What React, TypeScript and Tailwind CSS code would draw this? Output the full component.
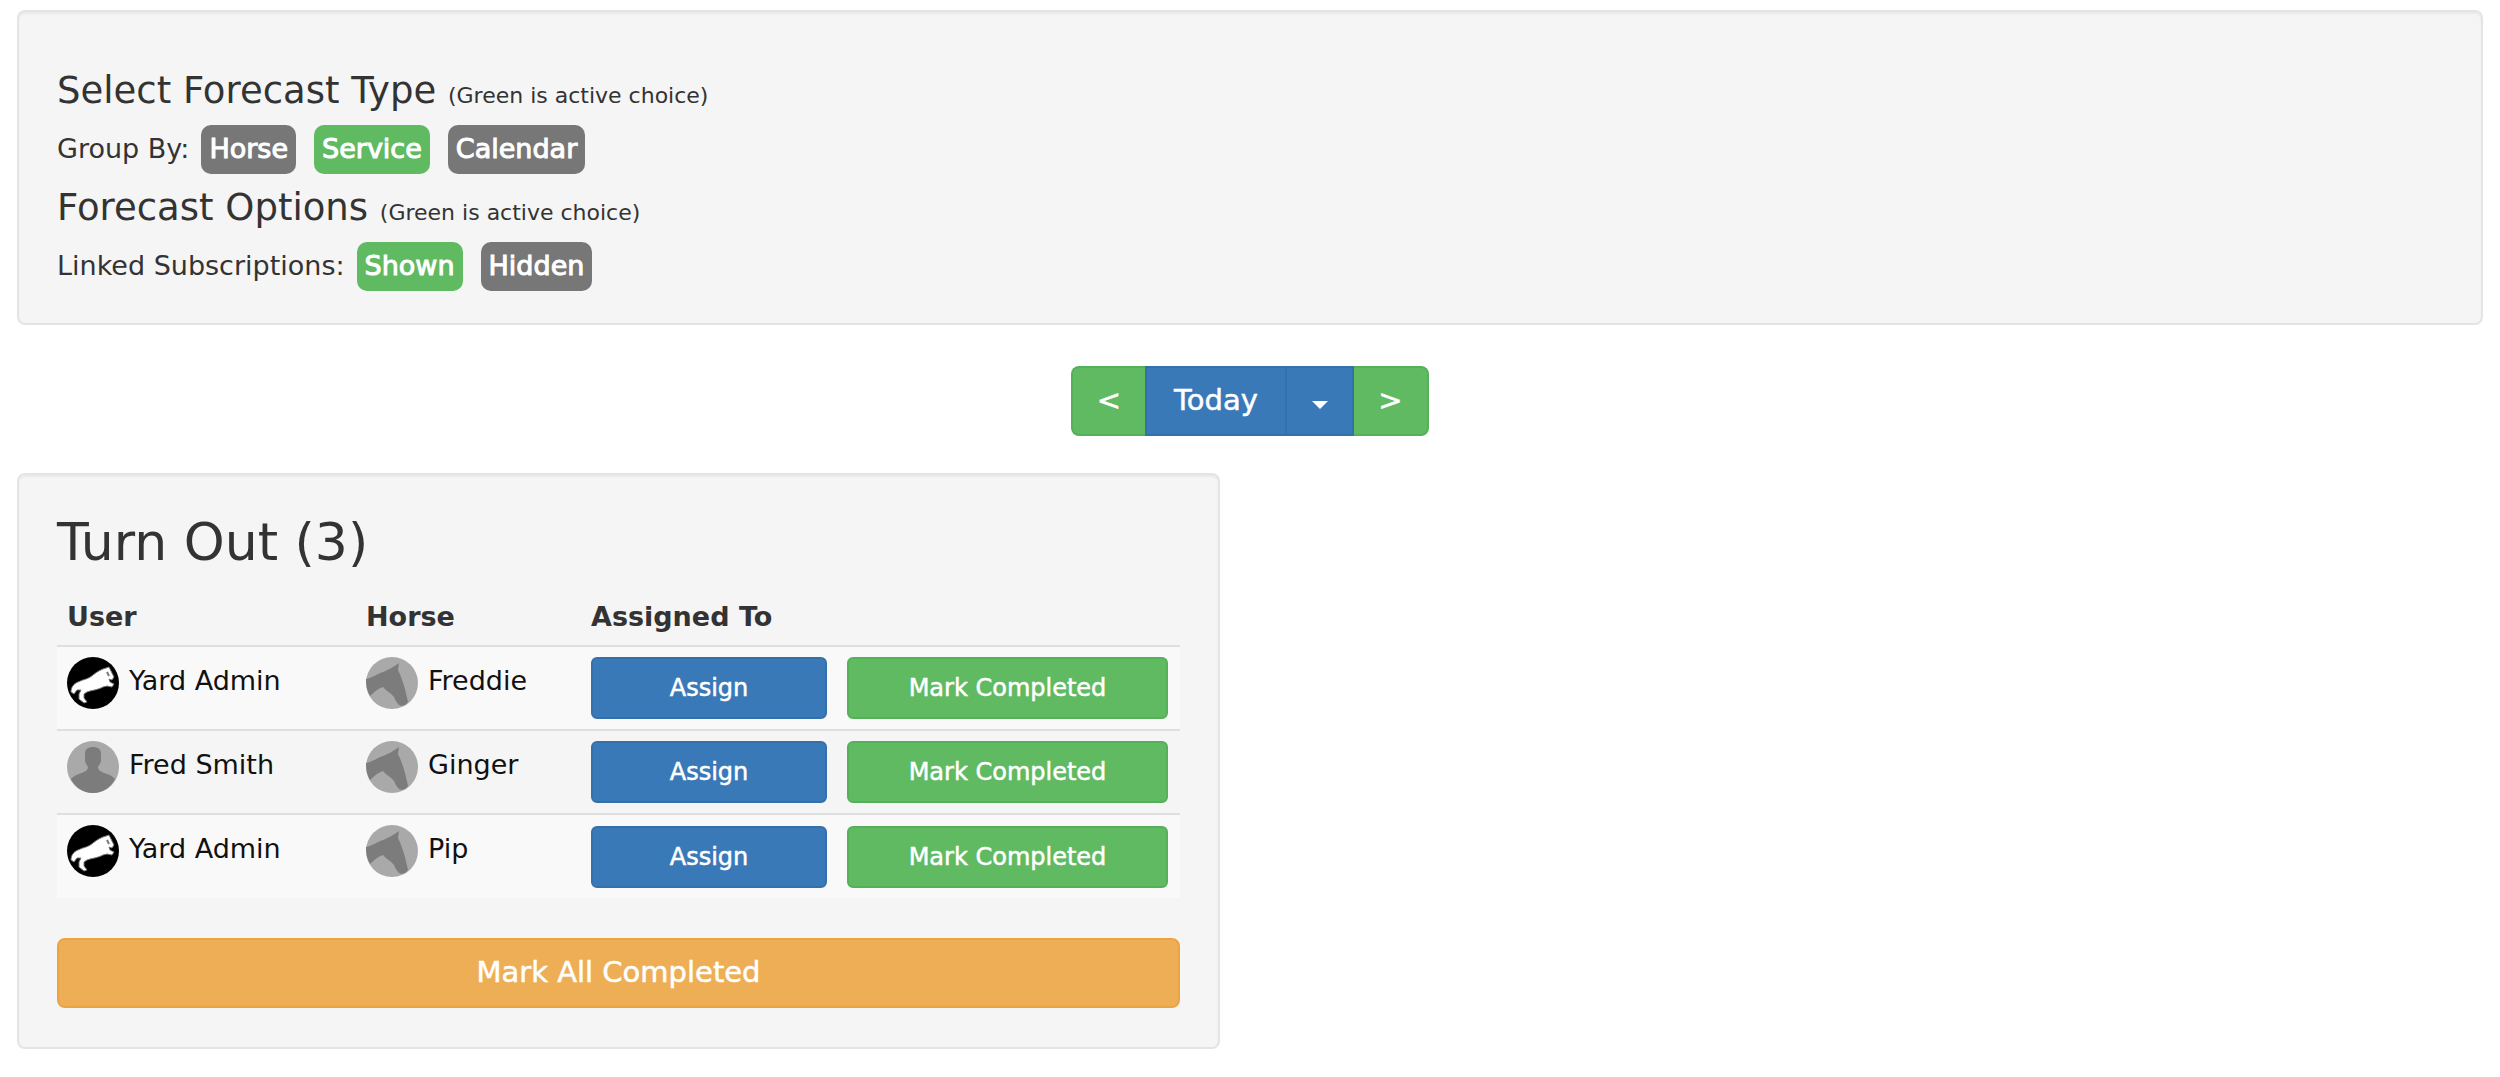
import React from 'react';

type Tone = 'green' | 'gray';

interface TagProps {
  label: string;
  active?: boolean;
}

interface Subscription {
  user: string;
  avatar: 'yard' | 'person';
  horse: string;
}

const subscriptions: Subscription[] = [
  { user: 'Yard Admin', avatar: 'yard', horse: 'Freddie' },
  { user: 'Fred Smith', avatar: 'person', horse: 'Ginger' },
  { user: 'Yard Admin', avatar: 'yard', horse: 'Pip' },
];

const tagTones: Record<Tone, string> = {
  green: 'bg-[#5fba62]',
  gray: 'bg-[#777777]',
};

const panel =
  'rounded-lg border-2 border-[#e4e4e4] bg-[#f5f5f5] px-[38px] shadow-[inset_0_2px_2px_rgba(0,0,0,0.05)]';

const buttonText = 'text-white [-webkit-text-stroke:0.5px_white]';
const blueButton = `border-2 border-[#3470aa] bg-[#3a79b7] ${buttonText}`;
const greenButton = `border-2 border-[#54b158] bg-[#5fba62] ${buttonText}`;

const Tag: React.FC<TagProps> = ({ label, active }) => (
  <a
    href="#"
    className={`flex h-[49px] items-center rounded-[10px] px-2 text-[27px] text-white [-webkit-text-stroke:1px_white] ${
      active ? tagTones.green : tagTones.gray
    }`}
  >
    {label}
  </a>
);

const OptionHeading: React.FC<{ title: string }> = ({ title }) => (
  <h4 className="flex h-[67px] items-center text-[37px]">
    <span>
      {title} <small className="text-[22px]">(Green is active choice)</small>
    </span>
  </h4>
);

const YardLogo: React.FC = () => (
  <svg viewBox="0 0 52 52" className="size-[52px] shrink-0" aria-hidden="true">
    <circle cx="26" cy="26" r="26" fill="#000" />
    <path
      d="M4 35C4 31 6 27 11 25C17 22 22 22 26 18C31 14 35 12 39 11L42 10L44 14L47 20L45 23L42 22L43 25L47 27L45 30L40 29L36 30C31 33 25 33 20 35L17 37L17 41L20 45L17 46L12 42L12 37L14 33L10 33L7 37Z"
      fill="#ffffff"
      stroke="#777"
      strokeWidth="1"
      strokeLinejoin="round"
    />
    <path d="M40 15L42 19" stroke="#777" strokeWidth="2" />
  </svg>
);

const PersonIcon: React.FC = () => (
  <svg viewBox="0 0 52 52" className="size-[52px] shrink-0" aria-hidden="true">
    <circle cx="26" cy="26" r="26" fill="#a9a9a9" />
    <path
      d="M18 13C18 8 21 6 26 6S34 8 34 13V19C34 22 32 24 31 26C31 30 35 31 40 33C44 34 46 36 48 38C44 46 36 52 26 52S8 46 4 38C6 36 8 34 12 33C17 31 21 30 21 26C20 24 18 22 18 19Z"
      fill="#7c7c7c"
    />
  </svg>
);

const HorseIcon: React.FC = () => (
  <svg viewBox="0 0 52 52" className="size-[52px] shrink-0" aria-hidden="true">
    <circle cx="26" cy="26" r="26" fill="#a9a9a9" />
    <path
      d="M0 22C6 21 11 17 17 15C22 13 26 11 33 6L32 13C35 19 37 25 39 32L42 45C40 48 36 50 33 48C30 45 29 42 28 40C25 36 20 34 17 30C13 31 9 34 4 39C1 34 0 28 0 22Z"
      fill="#7c7c7c"
    />
  </svg>
);

const App: React.FC = () => {
  return (
    <main className="px-[17px] pt-[10px] pb-[30px] text-[27px] text-[#333333] font-['DejaVu_Sans',Verdana,sans-serif]">
      {/* Forecast filters */}
      <section className={`${panel} pt-[45px] pb-[32px]`}>
        <OptionHeading title="Select Forecast Type" />
        <div className="flex h-[50px] items-center">
          <span className="mr-3">Group By:</span>
          <div className="flex gap-[18px]">
            <Tag label="Horse" />
            <Tag label="Service" active />
            <Tag label="Calendar" />
          </div>
        </div>
        <OptionHeading title="Forecast Options" />
        <div className="flex h-[50px] items-center">
          <span className="mr-3">Linked Subscriptions:</span>
          <div className="flex gap-[18px]">
            <Tag label="Shown" active />
            <Tag label="Hidden" />
          </div>
        </div>
      </section>

      {/* Day picker */}
      <div className="mt-[41px] flex h-[70px] justify-center text-[29px]">
        <button className={`${greenButton} w-[74px] rounded-l-lg border-r-0`}>&lt;</button>
        <button className={`${blueButton} w-[140px] border-r-0`}>Today</button>
        <button aria-label="Choose day" className={`${blueButton} flex w-[69px] items-center justify-center`}>
          <svg viewBox="0 0 16 8" className="mt-2 h-2 w-4" aria-hidden="true">
            <path d="M0 0h16L8 8z" fill="currentColor" />
          </svg>
        </button>
        <button className={`${greenButton} w-[75px] rounded-r-lg border-l-0`}>&gt;</button>
      </div>

      {/* Service group */}
      <section className={`${panel} mt-[37px] w-[calc(50%-30px)] pt-[35px] pb-[39px]`}>
        <h3 className="text-[52px] leading-[64px]">Turn Out (3)</h3>
        <table className="mt-[16px] w-full table-fixed">
          <colgroup>
            <col className="w-[299px]" />
            <col className="w-[225px]" />
            <col className="w-[256px]" />
            <col />
          </colgroup>
          <thead>
            <tr className="h-[56px] text-left text-[27px]">
              <th className="px-[10px] font-bold">User</th>
              <th className="px-[10px] font-bold">Horse</th>
              <th className="px-[10px] font-bold" colSpan={2}>
                Assigned To
              </th>
            </tr>
          </thead>
          <tbody className="text-[#111111]">
            {subscriptions.map((item, index) => (
              <tr key={index} className="h-[84px] border-t-2 border-[#dfdfdf] odd:bg-[#f9f9f9]">
                <td className="px-[10px] pt-[10px] align-top">
                  <div className="flex gap-[10px]">
                    {item.avatar === 'yard' ? <YardLogo /> : <PersonIcon />}
                    <span className="leading-[48px]">{item.user}</span>
                  </div>
                </td>
                <td className="px-[10px] pt-[10px] align-top">
                  <div className="flex gap-[10px]">
                    <HorseIcon />
                    <span className="leading-[48px]">{item.horse}</span>
                  </div>
                </td>
                <td className="px-[10px] text-[24px]">
                  <button className={`${blueButton} block h-[62px] w-full rounded-md`}>Assign</button>
                </td>
                <td className="pr-3 pl-[10px] text-[24px]">
                  <button className={`${greenButton} block h-[62px] w-full rounded-md`}>Mark Completed</button>
                </td>
              </tr>
            ))}
          </tbody>
        </table>
        <button
          className={`mt-[40px] block h-[70px] w-full rounded-lg border-2 border-[#eba443] bg-[#eeae55] text-[29px] ${buttonText}`}
        >
          Mark All Completed
        </button>
      </section>
    </main>
  );
};

export default App;
